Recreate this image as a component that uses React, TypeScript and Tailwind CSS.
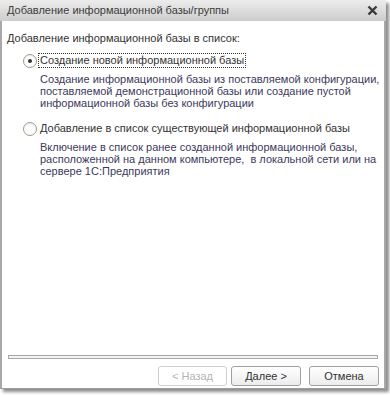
import { useState } from 'react';

type Option = {
  id: string;
  label: string;
  description: string[];
};

const options: Option[] = [
  {
    id: 'create',
    label: 'Создание новой информационной базы',
    description: [
      'Создание информационной базы из поставляемой конфигурации,',
      'поставляемой демонстрационной базы или создание пустой',
      'информационной базы без конфигурации',
    ],
  },
  {
    id: 'add',
    label: 'Добавление в список существующей информационной базы',
    description: [
      'Включение в список ранее созданной информационной базы,',
      'расположенной на данном компьютере,  в локальной сети или на',
      'сервере 1С:Предприятия',
    ],
  },
];

function Radio({ checked }: { checked: boolean }) {
  return (
    <span className="flex h-[14px] w-[14px] shrink-0 items-center justify-center rounded-full border border-[#a09a86] bg-white shadow-[inset_0_1px_1px_rgba(0,0,0,0.08)]">
      {checked && <span className="h-[4px] w-[4px] rounded-full bg-[#333]" />}
    </span>
  );
}

export default function App() {
  const [selected, setSelected] = useState('create');

  return (
    <div className="h-[395px] w-[390px] overflow-hidden bg-white font-['Liberation_Sans',Arial,sans-serif]">
      <div className="flex h-[389px] w-[386px] flex-col border-x-2 border-b border-x-[#a8a8a8] border-b-[#9c9c9c] bg-white shadow-[3px_3px_3px_rgba(0,0,0,0.45)]">
        <div className="-mx-[2px] flex h-[21px] items-center justify-between bg-gradient-to-b from-[#ececec] to-[#cdcdcd] pl-[7px] pr-[8px]">
          <span className="text-[11px] text-[#3c3c3c]">Добавление информационной базы/группы</span>
          <svg width="11" height="11" viewBox="0 0 11 11" aria-hidden>
            <path d="M1.5 1.5 L9.5 9.5 M9.5 1.5 L1.5 9.5" stroke="#3a3a3a" strokeWidth="2.4" />
          </svg>
        </div>

        <div className="flex flex-1 flex-col px-[5px] pt-[10px]">
          <p className="text-[11px] leading-[14px] text-[#333]">Добавление информационной базы в список:</p>

          <div className="mt-[8px] flex flex-col gap-[12px] pl-[16px]">
            {options.map(opt => (
              <div key={opt.id}>
                <button
                  type="button"
                  className="flex items-center gap-[1px] text-left"
                  onClick={() => setSelected(opt.id)}
                >
                  <Radio checked={selected === opt.id} />
                  <span
                    className={
                      selected === opt.id
                        ? 'border border-dotted border-[#333] px-[1px] text-[11px] leading-[13px] text-[#333]'
                        : 'border border-transparent px-[1px] text-[11px] leading-[13px] text-[#333]'
                    }
                  >
                    {opt.label}
                  </span>
                </button>
                <div className="mt-[5px] pl-[17px] text-[11px] leading-[12px] text-[#3d3a5c]">
                  {opt.description.map(line => (
                    <div key={line} className="whitespace-pre">{line}</div>
                  ))}
                </div>
              </div>
            ))}
          </div>

          <div className="flex-1" />

          <div className="mx-[1px] h-[4px] border border-[#a7a7a7] bg-[#f4f4f4]" />

          <div className="flex justify-end gap-[4px] pb-[2px] pr-0 pt-[7px]">
            <button
              type="button"
              disabled
              className="h-[20px] w-[69px] rounded-[3px] border border-[#d0d0d0] bg-white text-[11px] text-[#b4b4b4]"
            >
              &lt; Назад
            </button>
            <button
              type="button"
              className="h-[20px] w-[70px] rounded-[3px] border border-[#a0a0a0] bg-gradient-to-b from-white to-[#ececec] text-[11px] text-[#333]"
            >
              Далее &gt;
            </button>
            <button
              type="button"
              className="ml-[4px] h-[20px] w-[70px] rounded-[3px] border border-[#a0a0a0] bg-gradient-to-b from-white to-[#ececec] text-[11px] text-[#333]"
            >
              Отмена
            </button>
          </div>
        </div>
      </div>
    </div>
  );
}
